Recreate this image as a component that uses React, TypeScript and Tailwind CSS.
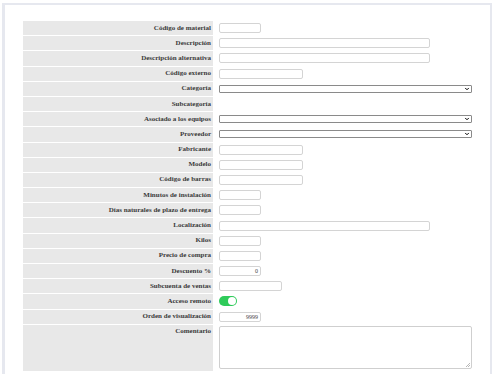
import { ChevronDown } from "lucide-react"

type Field =
  | { label: string; kind: "input"; w: string; value?: string }
  | { label: string; kind: "select" }
  | { label: string; kind: "none" }
  | { label: string; kind: "toggle" }

const fields: Field[] = [
  { label: "Código de material", kind: "input", w: "w-[42px]" },
  { label: "Descripción", kind: "input", w: "w-[211px]" },
  { label: "Descripción alternativa", kind: "input", w: "w-[211px]" },
  { label: "Código externo", kind: "input", w: "w-[84px]" },
  { label: "Categoría", kind: "select" },
  { label: "Subcategoría", kind: "none" },
  { label: "Asociado a los equipos", kind: "select" },
  { label: "Proveedor", kind: "select" },
  { label: "Fabricante", kind: "input", w: "w-[84px]" },
  { label: "Modelo", kind: "input", w: "w-[84px]" },
  { label: "Código de barras", kind: "input", w: "w-[84px]" },
  { label: "Minutos de instalación", kind: "input", w: "w-[42px]" },
  { label: "Días naturales de plazo de entrega", kind: "input", w: "w-[42px]" },
  { label: "Localización", kind: "input", w: "w-[211px]" },
  { label: "Kilos", kind: "input", w: "w-[42px]" },
  { label: "Precio de compra", kind: "input", w: "w-[42px]" },
  { label: "Descuento %", kind: "input", w: "w-[42px]", value: "0" },
  { label: "Subcuenta de ventas", kind: "input", w: "w-[63px]" },
  { label: "Acceso remoto", kind: "toggle" },
  { label: "Orden de visualización", kind: "input", w: "w-[42px]", value: "9999" },
]

function Control({ f }: { f: Field }) {
  if (f.kind === "input") {
    return (
      <div
        className={`${f.w} h-[10px] rounded-[2px] border border-[#d4d4d4] bg-white flex items-center justify-end pr-[2px] text-[6px] leading-none text-[#444]`}
      >
        {f.value}
      </div>
    )
  }
  if (f.kind === "select") {
    return (
      <div className="w-[253px] h-[8px] rounded-[1px] border border-[#8a8a8a] bg-white flex items-center justify-end pr-[1px]">
        <ChevronDown className="h-[6px] w-[6px] text-black" strokeWidth={4} />
      </div>
    )
  }
  if (f.kind === "toggle") {
    return (
      <div className="w-[18px] h-[10px] rounded-full bg-[#2fcb5a] flex items-center justify-end pr-[1px]">
        <div className="h-[8px] w-[8px] rounded-full bg-white" />
      </div>
    )
  }
  return null
}

export default function App() {
  return (
    <div
      className="w-[496px] h-[374px] bg-white overflow-hidden pl-[2px] pt-[3px] pr-[4px]"
      style={{ fontFamily: '"Liberation Serif", serif' }}
    >
      <div className="h-full border-l-[3px] border-t-[2px] border-r-[2px] border-[#e6e8ef] pt-[16px] pl-[18px] pr-[16px]">
        <div className="flex flex-col gap-y-[1px]">
          {fields.map((f) => (
            <div key={f.label} className="flex h-[14.2px]">
              <div className="w-[190px] shrink-0 bg-[#e8e8e8] flex items-center justify-end pr-[2px] text-[7px] font-bold text-[#3a3a3a] leading-none">
                {f.label}
              </div>
              <div className="flex-1 flex items-center pl-[6px]">
                <Control f={f} />
              </div>
            </div>
          ))}
          <div className="flex h-[46px]">
            <div className="w-[190px] shrink-0 bg-[#e8e8e8] flex justify-end pr-[2px] pt-[3px] text-[7px] font-bold text-[#3a3a3a] leading-none">
              Comentario
            </div>
            <div className="flex-1 pl-[6px] pt-[1px]">
              <div className="relative w-[253px] h-[43px] rounded-[2px] border border-[#cfcfcf] bg-white">
                <svg className="absolute right-[1px] bottom-[1px]" width="4" height="4" viewBox="0 0 4 4">
                  <path d="M0 4L4 0M2 4L4 2" stroke="#999" strokeWidth="0.7" />
                </svg>
              </div>
            </div>
          </div>
        </div>
      </div>
    </div>
  )
}
